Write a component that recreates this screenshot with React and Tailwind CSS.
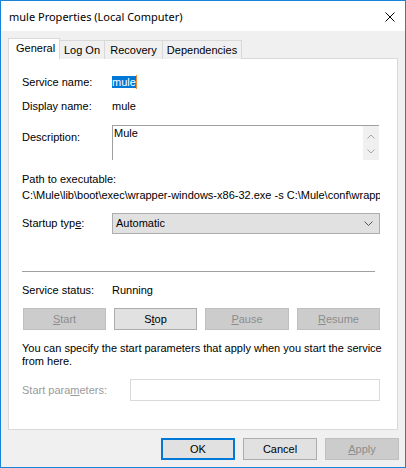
import React from 'react';

const tabs = ['General', 'Log On', 'Recovery', 'Dependencies'];

function Btn({ children, disabled, focused, className = '' }) {
  const look = disabled
    ? 'bg-[#cccccc] border border-[#bfbfbf] text-[#8d8d8d]'
    : focused
    ? 'bg-[#e1e1e1] border-2 border-[#0078d7] text-black'
    : 'bg-[#e1e1e1] border border-[#adadad] text-black';
  return (
    <div className={`h-[22px] flex items-center justify-center ${look} ${className}`}>
      {children}
    </div>
  );
}

export default function App() {
  return (
    <div className="w-[406px] h-[468px] border border-[#1883d7] bg-[#f0f0f0] flex flex-col overflow-hidden font-['Liberation_Sans',Arial,sans-serif] text-[11px] leading-[13px] text-black">
      {/* title bar */}
      <div className="h-[30px] shrink-0 bg-white flex items-center justify-between pl-[8px] pr-[10px]">
        <span className="font-['Noto_Sans',sans-serif] text-[11px] leading-[16px] pt-[1px]">
          mule Properties (Local Computer)
        </span>
        <svg width="10" height="10" viewBox="0 0 10 10" className="mt-[1px]">
          <path d="M0.5 0.5 L9.5 9.5 M9.5 0.5 L0.5 9.5" stroke="#000" strokeWidth="1" />
        </svg>
      </div>

      <div className="flex-1 flex flex-col px-[7px] pt-[7px]">
        {/* tabs */}
        <div className="flex items-end h-[21px] -mb-px relative z-10">
          {tabs.map((t, i) =>
            i === 0 ? (
              <div key={t} className="h-[21px] w-[52px] bg-white border border-b-0 border-[#d9d9d9] pl-[7px] pt-[3px]">
                {t}
              </div>
            ) : (
              <div
                key={t}
                className={`h-[19px] -ml-px border border-b-0 border-[#d9d9d9] bg-[#f0f0f0] flex items-center justify-center pt-[1px] ${
                  i === 1 ? 'w-[46px]' : i === 2 ? 'w-[59px]' : 'w-[80px]'
                }`}
              >
                {t}
              </div>
            )
          )}
        </div>

        {/* panel */}
        <div className="h-[372px] bg-white border border-[#d9d9d9] flex flex-col pl-[13px]">
          <div className="flex items-center h-[14px] mt-[16px]">
            <span className="w-[90px]">Service name:</span>
            <span className="relative bg-[#0078d7] text-white leading-[12px] pr-[1px]">
              mule
              <span className="absolute right-0 top-[-1px] w-px h-[14px] bg-[#ff8728]" />
            </span>
          </div>

          <div className="flex items-center h-[14px] mt-[10px]">
            <span className="w-[90px]">Display name:</span>
            <span>mule</span>
          </div>

          <div className="flex h-[35px] mt-[12px]">
            <span className="w-[90px] pt-[6px]">Description:</span>
            <div className="w-[267px] h-[35px] flex border-t border-l border-[#a0a0a0]">
              <div className="flex-1 pl-[1px] pt-[1px]">Mule</div>
              <div className="w-[16px] bg-[#f0f0f0] flex flex-col items-center pt-[8px] gap-[10px]">
                <svg width="8" height="5" viewBox="0 0 8 5">
                  <path d="M0.5 4.5 L4 1 L7.5 4.5" fill="none" stroke="#a6a6a6" strokeWidth="1" />
                </svg>
                <svg width="8" height="5" viewBox="0 0 8 5">
                  <path d="M0.5 0.5 L4 4 L7.5 0.5" fill="none" stroke="#a6a6a6" strokeWidth="1" />
                </svg>
              </div>
            </div>
          </div>

          <div className="mt-[13px]">Path to executable:</div>
          <div className="mt-[3px] w-[358px] overflow-hidden whitespace-nowrap">
            C:\Mule\lib\boot\exec\wrapper-windows-x86-32.exe -s C:\Mule\conf\wrapper.conf
          </div>

          <div className="flex items-center h-[21px] mt-[11px]">
            <span className="w-[90px]">
              Startup typ<span className="underline">e</span>:
            </span>
            <div className="w-[268px] h-[21px] bg-[#e1e1e1] border border-[#adadad] flex items-center justify-between pl-[3px] pr-[6px]">
              <span>Automatic</span>
              <svg width="9" height="5" viewBox="0 0 9 5">
                <path d="M0.5 0.5 L4.5 4.5 L8.5 0.5" fill="none" stroke="#555" strokeWidth="1" />
              </svg>
            </div>
          </div>

          <div className="mt-[37px] w-[353px] h-px bg-[#a0a0a0]" />

          <div className="flex items-center mt-[12px]">
            <span className="w-[90px]">Service status:</span>
            <span>Running</span>
          </div>

          <div className="flex gap-[8px] mt-[11px] ml-px">
            <Btn disabled className="w-[83px]">
              <span><span className="underline">S</span>tart</span>
            </Btn>
            <Btn className="w-[83px]">
              <span>S<span className="underline">t</span>op</span>
            </Btn>
            <Btn disabled className="w-[84px]">
              <span><span className="underline">P</span>ause</span>
            </Btn>
            <Btn disabled className="w-[83px]">
              <span><span className="underline">R</span>esume</span>
            </Btn>
          </div>

          <p className="mt-[12px] w-[360px]">
            You can specify the start parameters that apply when you start the service from here.
          </p>

          <div className="flex items-center h-[22px] mt-[11px]">
            <span className="w-[108px] text-[#9a9a9a]">
              Start para<span className="underline">m</span>eters:
            </span>
            <div className="w-[250px] h-[22px] bg-white border border-[#d9d9d9]" />
          </div>
        </div>

        {/* dialog buttons */}
        <div className="flex justify-end gap-[8px] mt-[8px] -mr-px">
          <Btn focused className="w-[74px]">OK</Btn>
          <Btn className="w-[74px]">Cancel</Btn>
          <Btn disabled className="w-[74px]">
            <span><span className="underline">A</span>pply</span>
          </Btn>
        </div>
      </div>
    </div>
  );
}
